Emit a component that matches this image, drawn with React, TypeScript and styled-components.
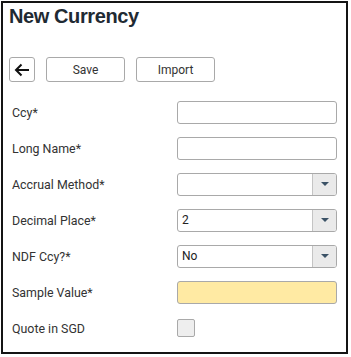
import styled, { createGlobalStyle } from 'styled-components';

const GlobalStyle = createGlobalStyle`
  html, body {
    margin: 0;
    padding: 0;
    background: #ffffff;
  }
  body {
    font-family: Roboto, "Liberation Sans", Arial, sans-serif;
  }
`;

const Panel = styled.section`
  box-sizing: border-box;
  margin: 1px 0 0 1px;
  width: 347px;
  height: 353px;
  border: 2px solid #141414;
  padding: 2px 0 0 6px;
`;

const Title = styled.h1`
  margin: 0;
  font-family: "Liberation Sans", Arial, sans-serif;
  font-size: 20px;
  line-height: 23px;
  font-weight: 700;
  color: #1f2a33;
  letter-spacing: -0.4px;
`;

const Toolbar = styled.div`
  display: flex;
  gap: 11px;
  margin-top: 29px;
`;

const ToolButton = styled.button<{ $width: number }>`
  box-sizing: border-box;
  width: ${(p) => p.$width}px;
  height: 25px;
  padding: 0;
  border: 1px solid #a9a9a9;
  border-radius: 3px;
  background: #ffffff;
  color: #333;
  font-family: Roboto, "Liberation Sans", Arial, sans-serif;
  font-size: 12px;
  display: flex;
  align-items: center;
  justify-content: center;
`;

const Form = styled.div`
  display: flex;
  flex-direction: column;
  margin-top: 12px;
`;

const Row = styled.div`
  display: flex;
  align-items: center;
  height: 36px;
  padding-left: 3px;
`;

const Label = styled.label`
  width: 165px;
  font-size: 12.4px;
  color: #333;
`;

const TextInput = styled.div<{ $highlight?: boolean }>`
  box-sizing: border-box;
  width: 160px;
  height: 23px;
  border: 1px solid #a9a9a9;
  border-radius: 3px;
  background: ${(p) => (p.$highlight ? '#ffeaa3' : '#ffffff')};
`;

const Select = styled.div`
  box-sizing: border-box;
  display: flex;
  width: 160px;
  height: 23px;
  border: 1px solid #a9a9a9;
  border-radius: 3px;
  overflow: hidden;
`;

const SelectValue = styled.span`
  flex: 1;
  padding-left: 4px;
  font-size: 12px;
  line-height: 21px;
  color: #222;
`;

const SelectButton = styled.span`
  width: 23px;
  border-left: 1px solid #c4c4c4;
  background: #eaeaea;
  display: flex;
  align-items: center;
  justify-content: center;
`;

const Caret = styled.span`
  width: 0;
  height: 0;
  border-left: 4px solid transparent;
  border-right: 4px solid transparent;
  border-top: 4px solid #3b5266;
`;

const Checkbox = styled.span`
  box-sizing: border-box;
  width: 18px;
  height: 18px;
  border: 1px solid #a9a9a9;
  border-radius: 2px;
  background: #eeeeee;
`;

const DropDown = ({ value }: { value?: string }) => (
  <Select>
    <SelectValue>{value}</SelectValue>
    <SelectButton>
      <Caret />
    </SelectButton>
  </Select>
);

const App = () => {
  return (
    <>
      <GlobalStyle />
      <Panel>
        <Title>New Currency</Title>
        <Toolbar>
          <ToolButton $width={26} aria-label="Back">
            <svg width="16" height="14" viewBox="0 0 16 14" fill="none">
              <path d="M15 7H2M7.5 1.5L2 7l5.5 5.5" stroke="#111" strokeWidth="2" />
            </svg>
          </ToolButton>
          <ToolButton $width={79}>Save</ToolButton>
          <ToolButton $width={79}>Import</ToolButton>
        </Toolbar>
        <Form>
          <Row>
            <Label>Ccy*</Label>
            <TextInput />
          </Row>
          <Row>
            <Label>Long Name*</Label>
            <TextInput />
          </Row>
          <Row>
            <Label>Accrual Method*</Label>
            <DropDown />
          </Row>
          <Row>
            <Label>Decimal Place*</Label>
            <DropDown value="2" />
          </Row>
          <Row>
            <Label>NDF Ccy?*</Label>
            <DropDown value="No" />
          </Row>
          <Row>
            <Label>Sample Value*</Label>
            <TextInput $highlight />
          </Row>
          <Row>
            <Label>Quote in SGD</Label>
            <Checkbox />
          </Row>
        </Form>
      </Panel>
    </>
  );
};

export default App;
